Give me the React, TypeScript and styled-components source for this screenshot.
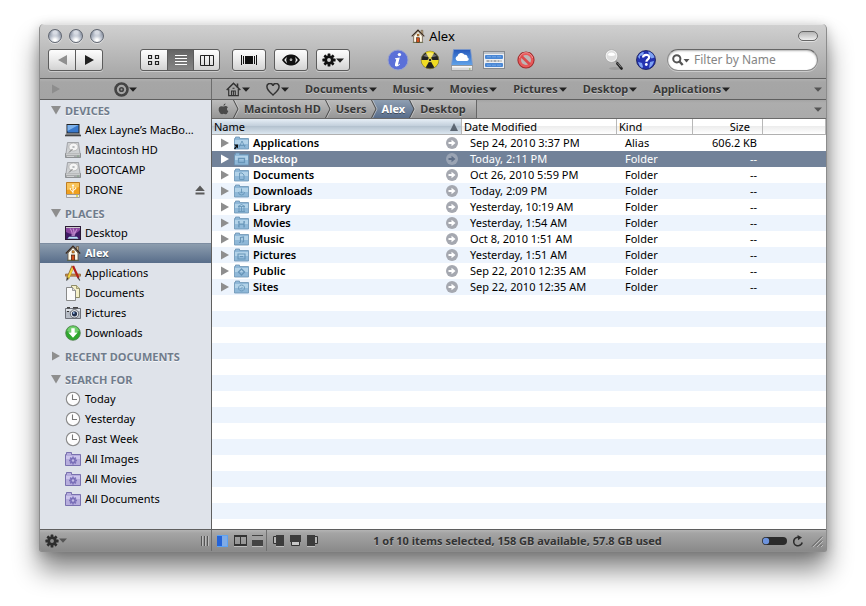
import React from "react";
import styled, { createGlobalStyle, css } from "styled-components";

const FONT = '"Lucida Grande", "Noto Sans", "Open Sans", sans-serif';

const GlobalStyle = createGlobalStyle`
  *, *::before, *::after { box-sizing: border-box; }
  body { margin: 0; background: #fff; font-family: ${FONT}; font-size: 11px; color: #000; }
  button, input { font: inherit; color: inherit; }
  ul { list-style: none; margin: 0; padding: 0; }
`;

const Desktop = styled.div`
  height: 100vh;
  min-height: 400px;
  padding: 24px 39px 54px;
`;

const Window = styled.main`
  display: flex;
  flex-direction: column;
  height: 100%;
  border: 1px solid #8c8c8c;
  border-top: 0;
  border-radius: 5px 5px 3px 3px;
  overflow: hidden;
  background: #a6a6a6;
  box-shadow: 0 18px 26px rgba(0, 0, 0, 0.48), 0 2px 12px rgba(0, 0, 0, 0.2);
`;

const PlainButton = styled.button`
  appearance: none;
  display: inline-flex;
  align-items: center;
  justify-content: center;
  margin: 0;
  padding: 0;
  border: 0;
  background: none;
  line-height: 16px;
  white-space: nowrap;
  svg { display: block; flex: none; }
`;

/* ---------- title and tool bars ---------- */

const Chrome = styled.header`
  flex: none;
  height: 55px;
  background: linear-gradient(#d0d0d0, #a6a6a6);
  border-top: 1px solid #e4e4e4;
  border-bottom: 1px solid #5f5f5f;
`;

const TitleBar = styled.div`
  display: grid;
  grid-template-columns: 1fr auto 1fr;
  align-items: center;
  height: 24px;
  padding: 0 8px 2px;
`;

const Lights = styled.div`
  display: flex;
  gap: 7px;
`;

const Light = styled(PlainButton)`
  width: 14px;
  height: 14px;
  border-radius: 7px;
  border: 1px solid #5f6570;
  background: radial-gradient(circle at 50% 20%, #d8dce4 0 15%, transparent 45%),
    radial-gradient(circle at 50% 85%, #fff 10%, #b4bbc8 45%, #757e8e 90%);
  box-shadow: 0 1px 0 rgba(255, 255, 255, 0.5);
`;

const Title = styled.h1`
  display: flex;
  align-items: center;
  gap: 4px;
  margin: 0;
  font-size: 13px;
  font-weight: 400;
  line-height: 18px;
`;

const Pill = styled(PlainButton)`
  justify-self: end;
  width: 20px;
  height: 10px;
  border: 1px solid #666;
  border-radius: 5px;
  background: linear-gradient(#b4b4b4, #eee);
  box-shadow: 0 1px 0 rgba(255, 255, 255, 0.5);
`;

const ToolBar = styled.div`
  display: flex;
  align-items: center;
  height: 22px;
  padding: 0 8px;
`;

const Segmented = styled.div<{ $gap: number }>`
  display: flex;
  flex: none;
  height: 22px;
  margin-right: ${(p) => p.$gap}px;
  border: 1px solid #5c5c5c;
  border-radius: 3px;
  overflow: hidden;
  background: #5c5c5c;
  gap: 1px;
  box-shadow: 0 1px 0 rgba(255, 255, 255, 0.4);
`;

const Segment = styled(PlainButton)<{ $width: number; $on?: boolean }>`
  width: ${(p) => p.$width}px;
  background: ${(p) =>
    p.$on ? "linear-gradient(#646464, #858585)" : "linear-gradient(#fdfdfd, #ececec 45%, #d2d2d2)"};
`;

const ToolIcon = styled(PlainButton)`
  flex: none;
  width: 32px;
  height: 22px;
`;

const Spacer = styled.div`
  flex: 1;
`;

const SearchField = styled.label`
  display: flex;
  align-items: center;
  gap: 4px;
  width: 151px;
  height: 22px;
  margin-left: 5px;
  padding: 0 10px 0 4px;
  border: 1px solid #8a8a8a;
  border-top-color: #666;
  border-radius: 11px;
  background: #fff;
  box-shadow: inset 0 1px 2px rgba(0, 0, 0, 0.3), 0 1px 0 rgba(255, 255, 255, 0.4);
  svg { flex: none; }
`;

const SearchInput = styled.input`
  flex: 1;
  min-width: 0;
  padding: 0;
  border: 0;
  outline: 0;
  background: none;
  font-size: 12px;
  line-height: 16px;
  &::placeholder { color: #858585; opacity: 1; }
`;

/* ---------- bookmarks bar ---------- */

const BookmarkBar = styled.div`
  display: grid;
  grid-template-columns: 172px 1fr;
  flex: none;
  height: 21px;
  background: linear-gradient(#b0b0b0, #a6a6a6 3px, #a4a4a4);
  border-bottom: 1px solid #5f5f5f;
`;

const BookmarkSide = styled.div`
  display: grid;
  grid-template-columns: 1fr auto 1fr;
  align-items: center;
  padding: 0 11px;
  border-right: 1px solid #6d6d6d;
`;

const Bookmarks = styled.nav`
  display: flex;
  align-items: center;
  gap: 16px;
  min-width: 0;
  padding: 0 4px 0 14px;
`;

const Bookmark = styled(PlainButton)`
  gap: 1px;
  font-weight: 700;
  color: #383838;
  text-shadow: 0 1px 0 rgba(255, 255, 255, 0.4);
  &:last-child { margin-left: auto; }
`;

/* ---------- body ---------- */

const Body = styled.div`
  display: grid;
  grid-template-columns: 172px 1fr;
  flex: 1;
  min-height: 0;
`;

const Sidebar = styled.aside`
  min-height: 0;
  overflow: hidden;
  background: #dfe3ea;
  border-right: 1px solid #5f5f5f;
`;

const GroupTitle = styled.h2<{ $first?: boolean }>`
  display: flex;
  align-items: center;
  gap: 4px;
  height: 18px;
  margin: ${(p) => (p.$first ? 2 : 5)}px 0 0;
  padding: 0 0 2px 11px;
  font-size: 11px;
  font-weight: 700;
  color: #707c8c;
  text-shadow: 0 1px 0 rgba(255, 255, 255, 0.7);
`;

const Place = styled.li<{ $on?: boolean }>`
  display: flex;
  align-items: center;
  height: 20px;
  padding: 0 6px 0 25px;
  ${(p) =>
    p.$on &&
    css`
      color: #fff;
      font-weight: 700;
      text-shadow: 0 1px 1px rgba(0, 0, 0, 0.5);
      background: linear-gradient(#8f9fb0, #586d8a);
      box-shadow: inset 0 1px 0 #7d8da1;
    `}
`;

const PlaceLink = styled.a`
  display: flex;
  flex: 1;
  align-items: center;
  gap: 4px;
  min-width: 0;
  line-height: 18px;
  color: inherit;
  text-decoration: none;
  white-space: nowrap;
  svg { flex: none; }
`;

const Main = styled.section`
  display: flex;
  flex-direction: column;
  min-width: 0;
  min-height: 0;
`;

const PathBar = styled.nav`
  display: flex;
  align-items: stretch;
  flex: none;
  height: 19px;
  padding-right: 4px;
  background: linear-gradient(#a4a4a4, #adadad 3px, #aaa);
  border-bottom: 1px solid #6a6a6a;
`;

const Crumb = styled(PlainButton)<{ $on?: boolean; $last?: boolean }>`
  padding: 0 ${(p) => (p.$last ? 10 : 3)}px 0 4px;
  font-weight: 700;
  color: ${(p) => (p.$on ? "#fff" : "#383838")};
  text-shadow: 0 1px 0 ${(p) => (p.$on ? "rgba(0,0,0,.4)" : "rgba(255,255,255,.4)")};
  background: ${(p) => (p.$on ? "linear-gradient(#8f9fb2, #586d8b)" : "linear-gradient(#bcbcbc, #969696)")};
  border-right: ${(p) => (p.$last ? "1px solid #666" : "0")};
  &:first-child { padding-left: 6px; }
`;

const PathMenu = styled(PlainButton)`
  margin-left: auto;
`;

const ListPane = styled.div`
  flex: 1;
  min-height: 0;
  overflow: hidden;
  background: repeating-linear-gradient(#edf4fd 0 16px, #fff 16px 32px);
`;

const FileTable = styled.table`
  width: 100%;
  table-layout: fixed;
  border-collapse: separate;
  border-spacing: 0;
`;

const Th = styled.th<{ $on?: boolean; $end?: boolean }>`
  height: 16px;
  padding: 0 ${(p) => (p.$end ? 12 : 3)}px 0 2px;
  border-right: 1px solid #b8b8b8;
  border-bottom: 1px solid #b0b0b0;
  background: ${(p) =>
    p.$on
      ? "linear-gradient(#e6eef6, #c3d0dc 45%, #b5c3d0 50%, #dbe6ef)"
      : "linear-gradient(#fff, #fff 45%, #ededed 50%, #fff)"};
  font-weight: 400;
  line-height: 15px;
  text-align: ${(p) => (p.$end ? "right" : "left")};
`;

const Spread = styled.div`
  display: flex;
  align-items: center;
  justify-content: space-between;
`;

const Td = styled.td<{ $end?: boolean }>`
  height: 16px;
  padding: 0 6px 0 8px;
  line-height: 16px;
  white-space: nowrap;
  text-align: ${(p) => (p.$end ? "right" : "left")};
  &:first-child { padding-right: 4px; }
`;

const Row = styled.tr<{ $on?: boolean }>`
  ${(p) =>
    p.$on &&
    css`
      background: #728299;
      color: #fff;
    `}
`;

const NameCell = styled.div`
  display: flex;
  align-items: center;
  height: 16px;
`;

const FileName = styled.span`
  flex: 1;
  padding-left: 4px;
  font-weight: 600;
`;

const Disclosure = styled(PlainButton)`
  margin-right: 4px;
`;

/* ---------- status bar ---------- */

const StatusBar = styled.footer`
  display: grid;
  grid-template-columns: 172px 1fr;
  flex: none;
  height: 22px;
  background: linear-gradient(#b4b4b4, #a5a5a5 3px, #8a8a8a);
  border-top: 1px solid #5f5f5f;
`;

const StatusSide = styled.div`
  display: flex;
  align-items: center;
  justify-content: space-between;
  padding: 0 2px 0 5px;
  border-right: 1px solid #6d6d6d;
`;

const StatusMain = styled.div`
  display: grid;
  grid-template-columns: 1fr auto 1fr;
  align-items: center;
  padding: 0 3px 0 0;
`;

const PaneButtons = styled.div`
  display: flex;
  align-items: center;
  height: 21px;
`;

const PaneGroup = styled.div<{ $ruled?: boolean }>`
  display: flex;
  align-items: center;
  gap: 4px;
  height: 21px;
  padding: 0 2px 0 5px;
  border-right: ${(p) => (p.$ruled ? "1px solid #707070" : "0")};
`;

const StatusText = styled.span`
  font-weight: 700;
  line-height: 16px;
  color: #333;
  text-shadow: 0 1px 0 rgba(255, 255, 255, 0.35);
`;

const StatusEnd = styled.div`
  display: flex;
  align-items: center;
  justify-content: flex-end;
  gap: 5px;
`;

const RefreshButton = styled(PlainButton)`
  margin-right: 2px;
`;

/* ---------- icons ---------- */

const Caret = ({ color = "#222" }: { color?: string }) => (
  <svg width="8" height="5" viewBox="0 0 8 5" aria-hidden="true">
    <path d="M0 0.500h8L4 4.800z" fill={color} />
  </svg>
);

const Triangle = ({ open, color = "#8e8e8e" }: { open?: boolean; color?: string }) => (
  <svg width="10" height="10" viewBox="0 0 10 10" aria-hidden="true">
    <path d={open ? "M0 1h10L5 9.500z" : "M1 0.500L9 5 1 9.500z"} fill={color} />
  </svg>
);

const GearShape = ({ size, color, hub = "#d4d4d4" }: { size: number; color: string; hub?: string }) => (
  <svg width={size} height={size} viewBox="-8 -8 16 16" aria-hidden="true">
    <g fill={color}>
      {[0, 45, 90, 135].map((a) => (
        <rect key={a} x="-1.600" y="-7.500" width="3.200" height="15" rx="0.600" transform={`rotate(${a})`} />
      ))}
    </g>
    <circle r="3.700" fill="none" stroke={color} strokeWidth="3" />
    <circle r="2.200" fill={hub} />
  </svg>
);

const House = ({ size = 14 }: { size?: number }) => (
  <svg width={size} height={size} viewBox="0 0 16 16" aria-hidden="true">
    <path d="M11.500 1.500h2v5l-2-2z" fill="#c8b08a" stroke="#5b4630" strokeWidth="0.600" />
    <path d="M3 8l5-5.500L13 8v7.200H3z" fill="#fffaea" stroke="#5d4a35" strokeWidth="0.800" />
    <path d="M0.800 8.500L8 1.200l7.200 7.300" fill="none" stroke="#3c2a1c" strokeWidth="1.200" />
    <rect x="6.500" y="10" width="3.200" height="5.200" fill="#d4501a" stroke="#3b1707" strokeWidth="0.700" />
    <rect x="7" y="5.800" width="2.200" height="2.200" fill="#e38c24" stroke="#4e3320" strokeWidth="0.500" />
    <path d="M2 15.500h12" stroke="#55633a" strokeWidth="0.700" />
  </svg>
);

const HouseOutline = () => (
  <svg width="15" height="15" viewBox="0 0 15 15" fill="none" stroke="#333" aria-hidden="true">
    <path d="M0.700 8L7.500 1.200 14.300 8" strokeWidth="1.500" />
    <path d="M11.500 1.500v4" strokeWidth="1.600" />
    <path d="M2.700 7v6.700h9.600V7" strokeWidth="1.200" />
    <path d="M5.500 13.700V9h3.800v4.700M7.400 9v4.500M6.500 6.300h2" strokeWidth="1.100" />
  </svg>
);

const Heart = () => (
  <svg width="14" height="13" viewBox="0 0 14 13" aria-hidden="true">
    <path d="M7 12C4.500 9.500 1 7 1 4a3 3 0 0 1 6-1 3 3 0 0 1 6 1c0 3-3.500 5.500-6 8z" fill="none" stroke="#333" strokeWidth="1.500" />
  </svg>
);

const Target = () => (
  <svg width="15" height="15" viewBox="0 0 15 15" aria-hidden="true">
    <circle cx="7.500" cy="7.500" r="6" fill="none" stroke="#444" strokeWidth="2.600" />
    <circle cx="7.500" cy="7.500" r="2.600" fill="#444" />
    <circle cx="7.500" cy="7.500" r="1" fill="#999" />
  </svg>
);

const IconView = () => (
  <svg width="12" height="10" viewBox="0 0 12 10" fill="none" stroke="#222" strokeWidth="1.200" aria-hidden="true">
    <path d="M0.500 0.500h3v3h-3zM7.500 0.500h3v3h-3zM0.500 6.500h3v3h-3zM7.500 6.500h3v3h-3z" />
  </svg>
);

const ListView = () => (
  <svg width="12" height="12" viewBox="0 0 12 12" stroke="#fff" aria-hidden="true">
    <path d="M0 1.500h12M0 4.500h12M0 7.500h12M0 10.500h12" />
  </svg>
);

const ColumnView = () => (
  <svg width="14" height="11" viewBox="0 0 14 11" fill="none" stroke="#222" aria-hidden="true">
    <path d="M0.500 0.500h13v10h-13zM4.500 0v11M9.500 0v11" />
  </svg>
);

const FlowView = () => (
  <svg width="16" height="10" viewBox="0 0 16 10" aria-hidden="true">
    <path d="M0 0h1v10H0zM2 1h1v8H2zM4 1h8v8H4zM13 1h1v8h-1zM15 0h1v10h-1z" fill="#111" />
  </svg>
);

const Eye = () => (
  <svg width="18" height="12" viewBox="0 0 18 12" aria-hidden="true">
    <path d="M0 6C3 1.500 6 0.500 9 0.500S15 1.500 18 6c-3 4.500-6 5.500-9 5.500S3 10.500 0 6z" fill="#111" />
    <path d="M2.200 6q1.300-2 3-2.900a5.200 5.200 0 0 0 0 5.800Q3.500 8 2.200 6zM15.800 6q-1.300-2-3-2.900a5.200 5.200 0 0 1 0 5.800Q14.500 8 15.800 6z" fill="#eee" />
    <circle cx="9" cy="5.800" r="1.300" fill="#ddd" />
    <circle cx="9" cy="5.800" r="0.500" fill="#111" />
  </svg>
);

const InfoIcon = () => (
  <svg width="22" height="22" viewBox="0 0 22 22" aria-hidden="true">
    <circle cx="11" cy="11" r="10" fill="#5b70d8" stroke="#9aa3cc" />
    <circle cx="12.400" cy="5.600" r="1.700" fill="#fff" />
    <path d="M8.200 9.200l4.600-0.700-1.800 6.800q-0.200 1 1.600-0.500l0.500 0.500q-2 2.400-4 2.200-1.700-0.300-1.100-2.400l1.300-4.600-1.400-0.500z" fill="#fff" />
  </svg>
);

const BurnIcon = () => (
  <svg width="20" height="20" viewBox="-10 -10 20 20" aria-hidden="true">
    <circle r="8.800" fill="#222" stroke="#777233" strokeWidth="0.800" />
    {[30, 150, 270].map((a) => (
      <path key={a} d="M0 0L7.500 -4.300A8.700 8.700 0 0 1 7.500 4.300z" fill="#f0dc22" transform={`rotate(${a})`} />
    ))}
    <circle r="1.800" fill="#222" stroke="#f4e660" strokeWidth="0.900" />
    <path d="M-7 -4Q0 -11 7 -4 0 -1.500 -7 -4z" fill="#fff" opacity="0.350" />
  </svg>
);

const CloudDrive = () => (
  <svg width="22" height="22" viewBox="0 0 22 22" aria-hidden="true">
    <defs>
      <linearGradient id="cloudSky" x1="0" y1="0" x2="0" y2="1">
        <stop offset="0" stopColor="#2558bb" />
        <stop offset="1" stopColor="#62a5ea" />
      </linearGradient>
    </defs>
    <path d="M2.500 0.500h17l2 16h-21z" fill="url(#cloudSky)" stroke="#7e9acb" strokeWidth="0.800" />
    <path d="M0.500 16.500h21v5h-21z" fill="#d8d8d8" stroke="#888" strokeWidth="0.700" />
    <path d="M1 17h20v1.500H1z" fill="#f8f8f8" />
    <path d="M6.500 12a2.600 2.600 0 0 1 0-5 3.800 3.800 0 0 1 7-1.200 2.700 2.700 0 0 1 3 2.700 1.800 1.800 0 0 1-0.500 3.500z" fill="#fff" />
    <circle cx="18.800" cy="20" r="0.700" fill="#7fae3c" />
  </svg>
);

const WindowIcon = () => (
  <svg width="22" height="18" viewBox="0 0 22 18" aria-hidden="true">
    <rect x="0.500" y="0.500" width="21" height="17" fill="#eceff3" stroke="#86898e" />
    <path d="M1 1h20v2H1z" fill="#bfc4ca" />
    <rect x="2" y="4" width="18" height="4" rx="1" fill="#4a87d4" />
    <rect x="2" y="12" width="18" height="4" rx="1" fill="#4a87d4" />
    <path d="M4 5.800h14M4 14.200h14" stroke="#7fb0ee" strokeDasharray="4 1" strokeWidth="0.800" />
    <path d="M3.500 10h15" stroke="#666" strokeDasharray="3 1 2 1" />
  </svg>
);

const NoEntry = () => (
  <svg width="18" height="18" viewBox="0 0 18 18" aria-hidden="true">
    <circle cx="9" cy="9" r="8.600" fill="#a02c2c" />
    <circle cx="9" cy="9" r="7.600" fill="#e8595a" />
    <circle cx="9" cy="9" r="5" fill="#bdb7b7" />
    <path d="M4.500 5.200L13 13.500" stroke="#dc4a4c" strokeWidth="2.600" />
    <path d="M2.200 7Q4 2 9 1.600 14 2 15.800 7" fill="none" stroke="#f4a0a0" strokeWidth="0.800" />
  </svg>
);

const Magnifier = () => (
  <svg width="20" height="22" viewBox="0 0 20 22" aria-hidden="true">
    <ellipse cx="11" cy="19.500" rx="6" ry="1.500" fill="#000" opacity="0.100" />
    <path d="M11 11l2.500 3" stroke="#888" strokeWidth="1.500" />
    <path d="M13.500 14.500L17.500 19.500" stroke="#222" strokeWidth="2.800" strokeLinecap="round" />
    <path d="M13.500 14l3.500 4.300" stroke="#999" strokeWidth="0.800" />
    <circle cx="7.500" cy="7" r="5.600" fill="#dedede" stroke="#f4f4f4" strokeWidth="1.300" />
    <circle cx="7.500" cy="7" r="6.300" fill="none" stroke="#999" strokeWidth="0.500" />
    <path d="M3.500 6a4.500 4.500 0 0 1 8 0q-4 2-8 0z" fill="#fff" />
  </svg>
);

const HelpGlobe = () => (
  <svg width="20" height="20" viewBox="0 0 20 20" aria-hidden="true">
    <circle cx="10" cy="10" r="9.500" fill="#2433b0" stroke="#141b55" strokeWidth="0.800" />
    <path d="M2 7q2-5 6-5l-1 3-3 1 0 3zM12 1.500q5 1 6.500 6l-3 1-2-3zM2 12l4 1 1 4-1 1Q3 16 2 12zM14 12l4-1q-1 5-5 7z" fill="#7fa3f4" />
    <path d="M7 7.500q0.200-2.600 3.200-2.600t3 2.400c0 2-2.800 2.100-2.800 4.400" fill="none" stroke="#fff" strokeWidth="2.200" />
    <circle cx="10.300" cy="14.500" r="1.400" fill="#fff" />
  </svg>
);

const FieldLens = () => (
  <svg width="18" height="12" viewBox="0 0 18 12" aria-hidden="true">
    <circle cx="4.800" cy="4.800" r="3.600" fill="none" stroke="#555" strokeWidth="2" />
    <path d="M7.500 7.500l3.200 3.500" stroke="#555" strokeWidth="2.400" />
    <path d="M11.500 5h6L14.500 8.500z" fill="#555" />
  </svg>
);

const Apple = () => (
  <svg width="11" height="12" viewBox="0 0 11 12" aria-hidden="true">
    <path d="M7.600 0.300q0 2-2.200 2.700Q5.400 1 7.600 0.300zM5.400 3.600q2.900-1.300 4.500 0.600-2.200 1.700 0.400 4-1.400 3.500-3 3-1.700-0.700-3.200 0Q1.800 11 0.700 7.500 0.300 3.600 3 3.200q1 0 2.400 0.400z" fill="#4a4a4a" />
  </svg>
);

const Chevron = ({ from = "gray", to = "gray" }: { from?: "gray" | "blue"; to?: "gray" | "blue" }) => (
  <svg width="8" height="18" viewBox="0 0 8 18" aria-hidden="true">
    <defs>
      <linearGradient id="crumbgray" x1="0" y1="0" x2="0" y2="18" gradientUnits="userSpaceOnUse">
        <stop offset="0" stopColor="#bcbcbc" />
        <stop offset="1" stopColor="#969696" />
      </linearGradient>
      <linearGradient id="crumbblue" x1="0" y1="0" x2="0" y2="18" gradientUnits="userSpaceOnUse">
        <stop offset="0" stopColor="#8f9fb2" />
        <stop offset="1" stopColor="#586d8b" />
      </linearGradient>
    </defs>
    <path d="M0 0h8v18H0z" fill={`url(#crumb${to})`} />
    <path d="M0 0h2l4.500 9L2 18H0z" fill={`url(#crumb${from})`} />
    <path d="M2.500 0l4.500 9-4.500 9" fill="none" stroke="#d8d8d8" strokeWidth="0.700" />
    <path d="M1.500 0L6 9l-4.500 9" fill="none" stroke="#484848" />
  </svg>
);

const Laptop = () => (
  <svg width="16" height="16" viewBox="0 0 16 16" aria-hidden="true">
    <rect x="1.500" y="2" width="13" height="9.500" fill="#222" />
    <rect x="2.500" y="3" width="11" height="7.500" fill="#3878cc" />
    <path d="M2.500 3h11L2.500 9z" fill="#7bb0ea" />
    <path d="M1 11.500h14l1 2H0z" fill="#777" />
    <path d="M0 13.200h16v1H0z" fill="#222" />
  </svg>
);

const Disk = () => (
  <svg width="16" height="16" viewBox="0 0 16 16" aria-hidden="true">
    <path d="M2.500 0.500h11l1.500 11H1z" fill="#cfd1d3" stroke="#8b8d90" strokeWidth="0.700" />
    <ellipse cx="8.500" cy="5" rx="4.600" ry="3.900" fill="#f4f4f4" stroke="#a0a0a0" strokeWidth="0.600" />
    <ellipse cx="8.500" cy="5" rx="1.300" ry="1" fill="#b5b8bb" />
    <path d="M4 10.500l3.500-3.500" stroke="#777" />
    <path d="M0.500 11.500h15v4H0.500z" fill="#a9abad" stroke="#76787a" strokeWidth="0.700" />
    <path d="M1 12h14" stroke="#eee" />
    <path d="M2 14.500h7" stroke="#e0e0e0" strokeWidth="0.700" />
    <circle cx="13" cy="14" r="0.600" fill="#5aa35a" />
  </svg>
);

const UsbDisk = () => (
  <svg width="16" height="16" viewBox="0 0 16 16" aria-hidden="true">
    <path d="M1.500 0.500h13v12h-13z" fill="#f0a01d" stroke="#b56c08" strokeWidth="0.800" />
    <path d="M2 1h12v4Q8 7 2 8z" fill="#f8c35a" />
    <path d="M8 11.500V3M8 10L5.300 7.800V6M8 8.500l2.700-1.500V5.500" fill="none" stroke="#fff" />
    <path d="M6.700 4L8 2l1.300 2z" fill="#fff" />
    <path d="M1.500 12.500h13v3h-13z" fill="#ececec" stroke="#909090" strokeWidth="0.800" />
    <circle cx="12" cy="14" r="0.900" fill="#d8cf20" />
  </svg>
);

const Eject = () => (
  <svg width="10" height="10" viewBox="0 0 10 10" aria-hidden="true">
    <path d="M5 0.500L9.800 6H0.200zM0.500 7.500h9v2h-9z" fill="#5a5a5a" />
  </svg>
);

const DesktopIcon = () => (
  <svg width="16" height="16" viewBox="0 0 16 16" aria-hidden="true">
    <rect x="0.500" y="1.500" width="15" height="13" fill="#3f1a66" stroke="#2a1a35" />
    <path d="M1 3h14v2Q9 12 1 7z" fill="#8a479f" />
    <path d="M5 3.500q3 4 2 7.500M8 3.500q2 4 0 7.500M12 4q-2 3-3 7" fill="none" stroke="#dca6e2" strokeWidth="1.200" opacity="0.700" />
    <path d="M1 2h14v1H1z" fill="#ccc" />
    <path d="M2.500 13.800l1.500-2h8l1.500 2z" fill="#b9e0f6" />
  </svg>
);

const AppsIcon = () => (
  <svg width="16" height="16" viewBox="0 0 16 16" aria-hidden="true">
    <path d="M0.500 9h15v2.200H0.500z" fill="#cf9350" stroke="#7b4d1c" strokeWidth="0.600" />
    <path d="M8 1L2.500 14" stroke="#92703a" strokeWidth="3" />
    <path d="M8.300 1.500L3 13.500" stroke="#f4d73e" strokeWidth="1.900" />
    <path d="M8 1l5.500 12" stroke="#b21f1b" strokeWidth="2.200" />
    <path d="M13 12.500l1.800 3" stroke="#444" strokeWidth="1.200" />
    <path d="M3.200 12.500L1.500 15.500" stroke="#333" strokeWidth="1.200" />
  </svg>
);

const DocsIcon = () => (
  <svg width="16" height="16" viewBox="0 0 16 16" aria-hidden="true">
    <path d="M6.500 0.500h5l3 3v9h-8z" fill="#f4f0c8" stroke="#85815a" strokeWidth="0.900" />
    <path d="M11.500 0.500v3h3" fill="#d6d0a0" stroke="#85815a" strokeWidth="0.700" />
    <path d="M1.500 2.500h6l3 3v10h-9z" fill="#fbfbfb" stroke="#7d7d7d" strokeWidth="0.900" />
    <path d="M7.500 2.500v3h3" fill="#ddd" stroke="#7d7d7d" strokeWidth="0.700" />
  </svg>
);

const CameraIcon = () => (
  <svg width="16" height="16" viewBox="0 0 16 16" aria-hidden="true">
    <path d="M0.500 3.500h15v10h-15z" fill="#b6bcc5" stroke="#64686f" strokeWidth="0.900" />
    <path d="M1 4h14v2H1z" fill="#dde1e6" />
    <path d="M2 2h3v1.500H2zM8 2h5v1.500H8z" fill="#444" />
    <circle cx="9.500" cy="8.800" r="4.200" fill="#e5e7ea" stroke="#5b5f66" strokeWidth="0.900" />
    <circle cx="9.500" cy="8.800" r="2.600" fill="#23314f" />
    <circle cx="8.800" cy="8" r="0.900" fill="#9ec2f2" />
    <path d="M2 6.500h2" stroke="#333" />
  </svg>
);

const DownloadIcon = () => (
  <svg width="16" height="16" viewBox="0 0 16 16" aria-hidden="true">
    <circle cx="8" cy="8" r="7.300" fill="#2fa82e" stroke="#4f7d4c" strokeWidth="0.800" />
    <path d="M2 6a6.200 6.200 0 0 1 12 0q-6 3-12 0z" fill="#8fdf8a" opacity="0.700" />
    <path d="M6.300 3.200h3.400v4.200h3L8 12.700 3.300 7.400h3z" fill="#fff" />
  </svg>
);

const ClockIcon = () => (
  <svg width="16" height="16" viewBox="0 0 16 16" aria-hidden="true">
    <circle cx="8" cy="8" r="6.700" fill="#fdfdfd" stroke="#8a8a8a" strokeWidth="1.100" />
    <path d="M7.500 3.500v5H12" fill="none" stroke="#777" strokeWidth="1.100" />
  </svg>
);

const SmartFolder = () => (
  <svg width="16" height="16" viewBox="0 0 16 16" aria-hidden="true">
    <path d="M0.500 14.500v-11h1v-2h5v2h9v11z" fill="#b6addd" stroke="#6f66a8" strokeWidth="0.900" />
    <path d="M1 5h14v3H1z" fill="#cdc6ec" />
    <g transform="translate(8 9.500)" fill="#7a70b8">
      {[0, 45, 90, 135].map((a) => (
        <rect key={a} x="-0.800" y="-4" width="1.600" height="8" transform={`rotate(${a})`} />
      ))}
      <circle r="2.800" />
      <circle r="1.200" fill="#c4bce6" />
    </g>
  </svg>
);

const folderMarks: Record<string, React.ReactNode> = {
  Applications: <path d="M5 11.500L8 5l3 6.500M4.500 9.500h7" />,
  Desktop: <path d="M4.500 6.500h6v4h-6z" strokeWidth="1.300" />,
  Documents: <path d="M5.500 5h2.500l2 2v4.500H5.500z" />,
  Downloads: <path d="M4.500 8a3 3 0 1 0 6 0M7.500 4.500v4.500M6 7.500L7.500 9 9 7.500" />,
  Library: <path d="M4 6.500L7.500 4.500l3.500 2zM5 7v4M7.500 7v4M10 7v4M4 11.500h7" />,
  Movies: <path d="M5 5v6.500M10 5v6.500M5 8.200h5M4 6h1M4 10h1M10 6h1M10 10h1" strokeWidth="1.200" />,
  Music: <path d="M6.500 10.500V5.500l3-0.500v5M5 10.500h1.500M8 10h1.500" strokeWidth="1.200" />,
  Pictures: <path d="M4 6h7v5H4zM6 8.500h3" strokeWidth="1.100" />,
  Public: <path d="M7.500 5l3 3-3 3-3-3z" strokeWidth="1.300" />,
  Sites: <path d="M7.500 5a3 3 0 1 0 0.100 0M6.500 9l2-2" />,
};

const FolderIcon = ({ name, alias }: { name: string; alias?: boolean }) => (
  <svg width="15" height="14" viewBox="0 0 15 14" aria-hidden="true">
    <path d="M0.500 13V2.500h1V1h4v1.500h9V13z" fill="#8fb8d8" stroke="#6a93b4" strokeWidth="0.800" />
    <path d="M1 4h13v4H1z" fill="#b2d2e8" />
    <g fill="none" stroke="#6795b8" strokeWidth="0.900">{folderMarks[name]}</g>
    {alias && <path d="M0 8.500h4v4L2.800 11.300 1 13.500 0 12.500l1.800-2.200z" fill="#111" />}
  </svg>
);

const GoArrow = ({ on }: { on?: boolean }) => (
  <svg width="12" height="12" viewBox="0 0 12 12" aria-hidden="true">
    <circle cx="6" cy="6" r="6" fill={on ? "#9aa4b4" : "#a5a8b0"} />
    <path d="M2.500 5h3V2.800L9.500 6 5.500 9.200V7h-3z" fill={on ? "#5f6f88" : "#fff"} />
  </svg>
);

const Grip = () => (
  <svg width="8" height="10" viewBox="0 0 8 10" aria-hidden="true">
    <path d="M0.500 0v10M3.500 0v10M6.500 0v10" stroke="#555" />
    <path d="M1.500 0v10M4.500 0v10M7.500 0v10" stroke="#bbb" />
  </svg>
);

type PaneKind = "left" | "two" | "bottom" | "drawerL" | "drawerB" | "drawerR";

const PaneIcon = ({ kind }: { kind: PaneKind }) => (
  <svg width="13" height="12" viewBox="0 0 13 12" aria-hidden="true">
    {kind === "left" && (
      <>
        <rect x="0" y="0" width="11" height="12" fill="#5da2f2" />
        <rect x="0" y="1" width="5" height="10" fill="#2463d8" />
        <rect x="5" y="1" width="5" height="10" fill="#7fabe6" />
      </>
    )}
    {kind === "two" && (
      <>
        <path d="M0 0h13v11H0zM1 2v7h5V2zM7 2v7h5V2z" fill="#333" fillRule="evenodd" />
        <path d="M0 11.500h13" stroke="#bdbdbd" />
      </>
    )}
    {kind === "bottom" && (
      <>
        <rect x="1" y="0" width="11" height="11" fill="#444" />
        <rect x="1" y="1" width="11" height="4" fill="#a0a0a0" />
        <path d="M1 11.500h11" stroke="#bdbdbd" />
      </>
    )}
    {kind === "drawerL" && (
      <>
        <path d="M4 0h8v11H4z" fill="#3c3c3c" />
        <path d="M4 1.500H1.500v7H4" fill="#b4b4b4" stroke="#333" />
        <path d="M4 11.500h8" stroke="#bdbdbd" />
      </>
    )}
    {kind === "drawerB" && (
      <>
        <path d="M1 0h11v7H1z" fill="#3c3c3c" />
        <path d="M2.500 7v3.500h8V7" fill="#c8c8c8" stroke="#333" />
      </>
    )}
    {kind === "drawerR" && (
      <>
        <path d="M1 0h8v11H1z" fill="#3c3c3c" />
        <path d="M9 1.500h2.500v7H9" fill="#b4b4b4" stroke="#333" />
        <path d="M1 11.500h8" stroke="#bdbdbd" />
      </>
    )}
  </svg>
);

const Capsule = () => (
  <svg width="25" height="8" viewBox="0 0 25 8" aria-hidden="true">
    <rect width="25" height="8" rx="4" fill="#2b2b2b" />
    <circle cx="4" cy="4" r="3.200" fill="#6d93dd" />
  </svg>
);

const Refresh = () => (
  <svg width="12" height="12" viewBox="0 0 12 12" aria-hidden="true">
    <path d="M7 2.300A4.300 4.300 0 1 0 10.200 7.500" fill="none" stroke="#2c2c2c" strokeWidth="1.600" />
    <path d="M5.500 0l4.500 2.500L6 5.200z" fill="#2c2c2c" />
  </svg>
);

const ResizeGrip = () => (
  <svg width="12" height="12" viewBox="0 0 12 12" aria-hidden="true">
    <path d="M1 11.500L11 1.500M5 11.500L11 5.500M9 11.500l2-2" stroke="#5a5a5a" />
    <path d="M2 12L12 2M6 12l6-6M10 12l2-2" stroke="#cfcfcf" strokeWidth="0.700" />
  </svg>
);

/* ---------- data ---------- */

type PlaceItem = { label: string; icon: React.ReactNode; on?: boolean; eject?: boolean };
type Group = { title: string; open: boolean; items: PlaceItem[] };

const groups: Group[] = [
  {
    title: "DEVICES",
    open: true,
    items: [
      { label: "Alex Layne’s MacBo…", icon: <Laptop /> },
      { label: "Macintosh HD", icon: <Disk /> },
      { label: "BOOTCAMP", icon: <Disk /> },
      { label: "DRONE", icon: <UsbDisk />, eject: true },
    ],
  },
  {
    title: "PLACES",
    open: true,
    items: [
      { label: "Desktop", icon: <DesktopIcon /> },
      { label: "Alex", icon: <House size={16} />, on: true },
      { label: "Applications", icon: <AppsIcon /> },
      { label: "Documents", icon: <DocsIcon /> },
      { label: "Pictures", icon: <CameraIcon /> },
      { label: "Downloads", icon: <DownloadIcon /> },
    ],
  },
  { title: "RECENT DOCUMENTS", open: false, items: [] },
  {
    title: "SEARCH FOR",
    open: true,
    items: [
      { label: "Today", icon: <ClockIcon /> },
      { label: "Yesterday", icon: <ClockIcon /> },
      { label: "Past Week", icon: <ClockIcon /> },
      { label: "All Images", icon: <SmartFolder /> },
      { label: "All Movies", icon: <SmartFolder /> },
      { label: "All Documents", icon: <SmartFolder /> },
    ],
  },
];

const files = [
  { name: "Applications", date: "Sep 24, 2010 3:37 PM", kind: "Alias", size: "606.2 KB" },
  { name: "Desktop", date: "Today, 2:11 PM", kind: "Folder", size: "--" },
  { name: "Documents", date: "Oct 26, 2010 5:59 PM", kind: "Folder", size: "--" },
  { name: "Downloads", date: "Today, 2:09 PM", kind: "Folder", size: "--" },
  { name: "Library", date: "Yesterday, 10:19 AM", kind: "Folder", size: "--" },
  { name: "Movies", date: "Yesterday, 1:54 AM", kind: "Folder", size: "--" },
  { name: "Music", date: "Oct 8, 2010 1:51 AM", kind: "Folder", size: "--" },
  { name: "Pictures", date: "Yesterday, 1:51 AM", kind: "Folder", size: "--" },
  { name: "Public", date: "Sep 22, 2010 12:35 AM", kind: "Folder", size: "--" },
  { name: "Sites", date: "Sep 22, 2010 12:35 AM", kind: "Folder", size: "--" },
];

const bookmarks = ["Documents", "Music", "Movies", "Pictures", "Desktop", "Applications"];
const panes: PaneKind[] = ["left", "two", "bottom"];
const drawers: PaneKind[] = ["drawerL", "drawerB", "drawerR"];

export default function App() {
  return (
    <Desktop>
      <GlobalStyle />
      <Window>
        <Chrome>
          <TitleBar>
            <Lights>
              <Light aria-label="Close" />
              <Light aria-label="Minimize" />
              <Light aria-label="Zoom" />
            </Lights>
            <Title>
              <House />
              Alex
            </Title>
            <Pill aria-label="Toggle toolbar" />
          </TitleBar>
          <ToolBar>
            <Segmented $gap={37}>
              <Segment $width={26} aria-label="Back">
                <svg width="9" height="10" viewBox="0 0 9 10"><path d="M9 0v10L0 5z" fill="#8f8f8f" /></svg>
              </Segment>
              <Segment $width={26} aria-label="Forward">
                <svg width="9" height="10" viewBox="0 0 9 10"><path d="M0 0v10l9-5z" fill="#222" /></svg>
              </Segment>
            </Segmented>
            <Segmented $gap={12}>
              <Segment $width={26} aria-label="Icon view"><IconView /></Segment>
              <Segment $width={25} $on aria-label="List view"><ListView /></Segment>
              <Segment $width={25} aria-label="Column view"><ColumnView /></Segment>
            </Segmented>
            <Segmented $gap={8}>
              <Segment $width={32} aria-label="Cover flow"><FlowView /></Segment>
            </Segmented>
            <Segmented $gap={8}>
              <Segment $width={32} aria-label="Quick look"><Eye /></Segment>
            </Segmented>
            <Segmented $gap={32}>
              <Segment $width={32} aria-label="Action">
                <GearShape size={14} color="#111" />
                <Caret />
              </Segment>
            </Segmented>
            <ToolIcon aria-label="Get info"><InfoIcon /></ToolIcon>
            <ToolIcon aria-label="Burn"><BurnIcon /></ToolIcon>
            <ToolIcon aria-label="Cloud disk"><CloudDrive /></ToolIcon>
            <ToolIcon aria-label="Connect"><WindowIcon /></ToolIcon>
            <ToolIcon aria-label="Delete"><NoEntry /></ToolIcon>
            <Spacer />
            <ToolIcon aria-label="Find"><Magnifier /></ToolIcon>
            <ToolIcon aria-label="Help"><HelpGlobe /></ToolIcon>
            <SearchField>
              <FieldLens />
              <SearchInput type="text" placeholder="Filter by Name" aria-label="Filter by Name" />
            </SearchField>
          </ToolBar>
        </Chrome>

        <BookmarkBar>
          <BookmarkSide>
            <Triangle color="#8d8d8d" />
            <PlainButton aria-label="Sidebar options">
              <Target />
              <Caret />
            </PlainButton>
          </BookmarkSide>
          <Bookmarks>
            <Bookmark aria-label="Home"><HouseOutline /><Caret /></Bookmark>
            <Bookmark aria-label="Favorites"><Heart /><Caret /></Bookmark>
            {bookmarks.map((b) => (
              <Bookmark key={b}>{b}<Caret /></Bookmark>
            ))}
            <Bookmark aria-label="More bookmarks"><Caret color="#555" /></Bookmark>
          </Bookmarks>
        </BookmarkBar>

        <Body>
          <Sidebar>
            {groups.map((g, i) => (
              <section key={g.title}>
                <GroupTitle $first={i === 0}>
                  <Triangle open={g.open} />
                  {g.title}
                </GroupTitle>
                <ul>
                  {g.items.map((it) => (
                    <Place key={it.label} $on={it.on}>
                      <PlaceLink href="#">
                        {it.icon}
                        {it.label}
                      </PlaceLink>
                      {it.eject && <PlainButton aria-label="Eject"><Eject /></PlainButton>}
                    </Place>
                  ))}
                </ul>
              </section>
            ))}
          </Sidebar>
          <Main>
            <PathBar>
              <Crumb aria-label="Computer"><Apple /></Crumb>
              <Chevron />
              <Crumb>Macintosh HD</Crumb>
              <Chevron />
              <Crumb>Users</Crumb>
              <Chevron to="blue" />
              <Crumb $on>Alex</Crumb>
              <Chevron from="blue" />
              <Crumb $last>Desktop</Crumb>
              <PathMenu aria-label="Path options"><Caret color="#555" /></PathMenu>
            </PathBar>
            <ListPane>
              <FileTable>
                <colgroup>
                  <col width="250" />
                  <col width="155" />
                  <col width="76" />
                  <col width="70" />
                  <col />
                </colgroup>
                <thead>
                  <tr>
                    <Th $on>
                      <Spread>
                        Name
                        <svg width="8" height="8" viewBox="0 0 8 8"><path d="M4 0l4 8H0z" fill="#5c6672" /></svg>
                      </Spread>
                    </Th>
                    <Th>Date Modified</Th>
                    <Th>Kind</Th>
                    <Th $end>Size</Th>
                    <Th />
                  </tr>
                </thead>
                <tbody>
                  {files.map((f) => {
                    const on = f.name === "Desktop";
                    return (
                      <Row key={f.name} $on={on}>
                        <Td>
                          <NameCell>
                            <Disclosure aria-label={`Expand ${f.name}`}>
                              <Triangle color={on ? "#fff" : "#8e8e8e"} />
                            </Disclosure>
                            <FolderIcon name={f.name} alias={f.kind === "Alias"} />
                            <FileName>{f.name}</FileName>
                            <PlainButton aria-label={`Go to ${f.name}`}><GoArrow on={on} /></PlainButton>
                          </NameCell>
                        </Td>
                        <Td>{f.date}</Td>
                        <Td>{f.kind}</Td>
                        <Td $end>{f.size}</Td>
                        <Td />
                      </Row>
                    );
                  })}
                </tbody>
              </FileTable>
            </ListPane>
          </Main>
        </Body>

        <StatusBar>
          <StatusSide>
            <PlainButton aria-label="Actions">
              <GearShape size={14} color="#2e2e2e" hub="#8c8c8c" />
              <Caret color="#555" />
            </PlainButton>
            <Grip />
          </StatusSide>
          <StatusMain>
            <PaneButtons>
              <PaneGroup $ruled>
                {panes.map((k) => <PlainButton key={k} aria-label={k}><PaneIcon kind={k} /></PlainButton>)}
              </PaneGroup>
              <PaneGroup>
                {drawers.map((k) => <PlainButton key={k} aria-label={k}><PaneIcon kind={k} /></PlainButton>)}
              </PaneGroup>
            </PaneButtons>
            <StatusText>1 of 10 items selected, 158 GB available, 57.8 GB used</StatusText>
            <StatusEnd>
              <Capsule />
              <RefreshButton aria-label="Refresh"><Refresh /></RefreshButton>
              <ResizeGrip />
            </StatusEnd>
          </StatusMain>
        </StatusBar>
      </Window>
    </Desktop>
  );
}
